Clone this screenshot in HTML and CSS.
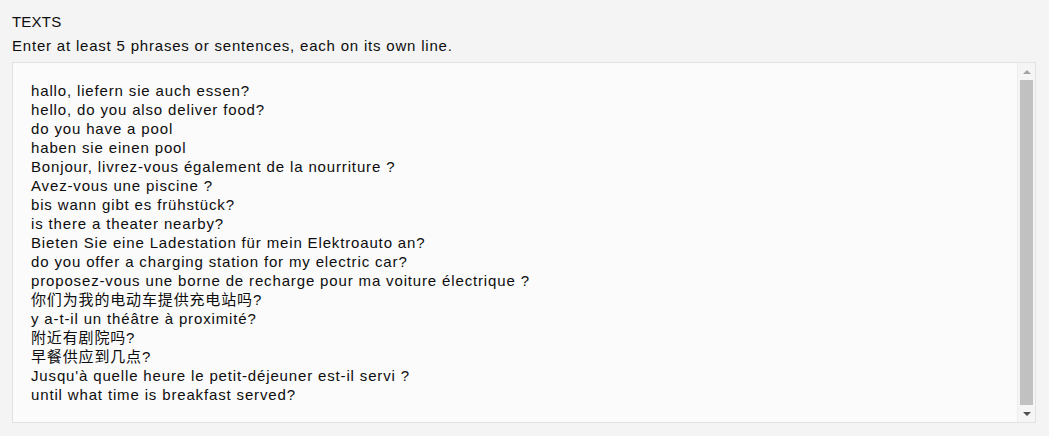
FILE: index.html
```html
<!DOCTYPE html>
<html lang="en">
<head>
<meta charset="utf-8">
<link rel="stylesheet" href="styles.css">
</head>
<body>
<div class="field">
  <div class="label">TEXTS</div>
  <div class="hint">Enter at least 5 phrases or sentences, each on its own line.</div>
  <div class="textbox">
    <div class="lines">
      <div>hallo, liefern sie auch essen?</div>
      <div>hello, do you also deliver food?</div>
      <div>do you have a pool</div>
      <div>haben sie einen pool</div>
      <div>Bonjour, livrez-vous également de la nourriture ?</div>
      <div>Avez-vous une piscine ?</div>
      <div>bis wann gibt es frühstück?</div>
      <div>is there a theater nearby?</div>
      <div>Bieten Sie eine Ladestation für mein Elektroauto an?</div>
      <div>do you offer a charging station for my electric car?</div>
      <div>proposez-vous une borne de recharge pour ma voiture électrique ?</div>
      <div>你们为我的电动车提供充电站吗?</div>
      <div>y a-t-il un théâtre à proximité?</div>
      <div>附近有剧院吗?</div>
      <div>早餐供应到几点?</div>
      <div>Jusqu'à quelle heure le petit-déjeuner est-il servi ?</div>
      <div>until what time is breakfast served?</div>
    </div>
    <div class="scrollbar">
      <div class="arrow up"></div>
      <div class="thumb"></div>
      <div class="arrow down"></div>
    </div>
  </div>
</div>
</body>
</html>
```

FILE: styles.css
```css
html, body {
  margin: 0;
  padding: 0;
  background: #f4f4f4;
}
body {
  font-family: "Liberation Sans", Arial, "Noto Sans CJK SC", sans-serif;
  font-size: 15px;
  letter-spacing: 0.85px;
  color: #0d0d0d;
}
.field {
  padding: 12px 13px 0 12px;
}
.label {
  line-height: 19px;
  letter-spacing: 0.2px;
}
.hint {
  line-height: 19px;
  margin-top: 5px;
  letter-spacing: 0.8px;
}
.textbox {
  margin-top: 7px;
  height: 359px;
  border: 1px solid #e2e2e2;
  background: #fbfbfb;
  display: flex;
}
.lines {
  flex: 1;
  padding: 18px 18px 0 18px;
  line-height: 19px;
}
.scrollbar {
  width: 17px;
  display: flex;
  flex-direction: column;
  align-items: center;
  border-left: 1px solid #ececec;
  background: #f5f5f5;
}
.arrow {
  height: 17px;
  width: 100%;
  display: flex;
  align-items: center;
  justify-content: center;
  flex: none;
}
.arrow::before {
  content: "";
  width: 0;
  height: 0;
  border-left: 4px solid transparent;
  border-right: 4px solid transparent;
}
.up::before {
  border-bottom: 4px solid #a3a3a3;
}
.down::before {
  border-top: 4px solid #505050;
}
.thumb {
  flex: 1;
  width: 13px;
  background: #c1c1c1;
}
```
